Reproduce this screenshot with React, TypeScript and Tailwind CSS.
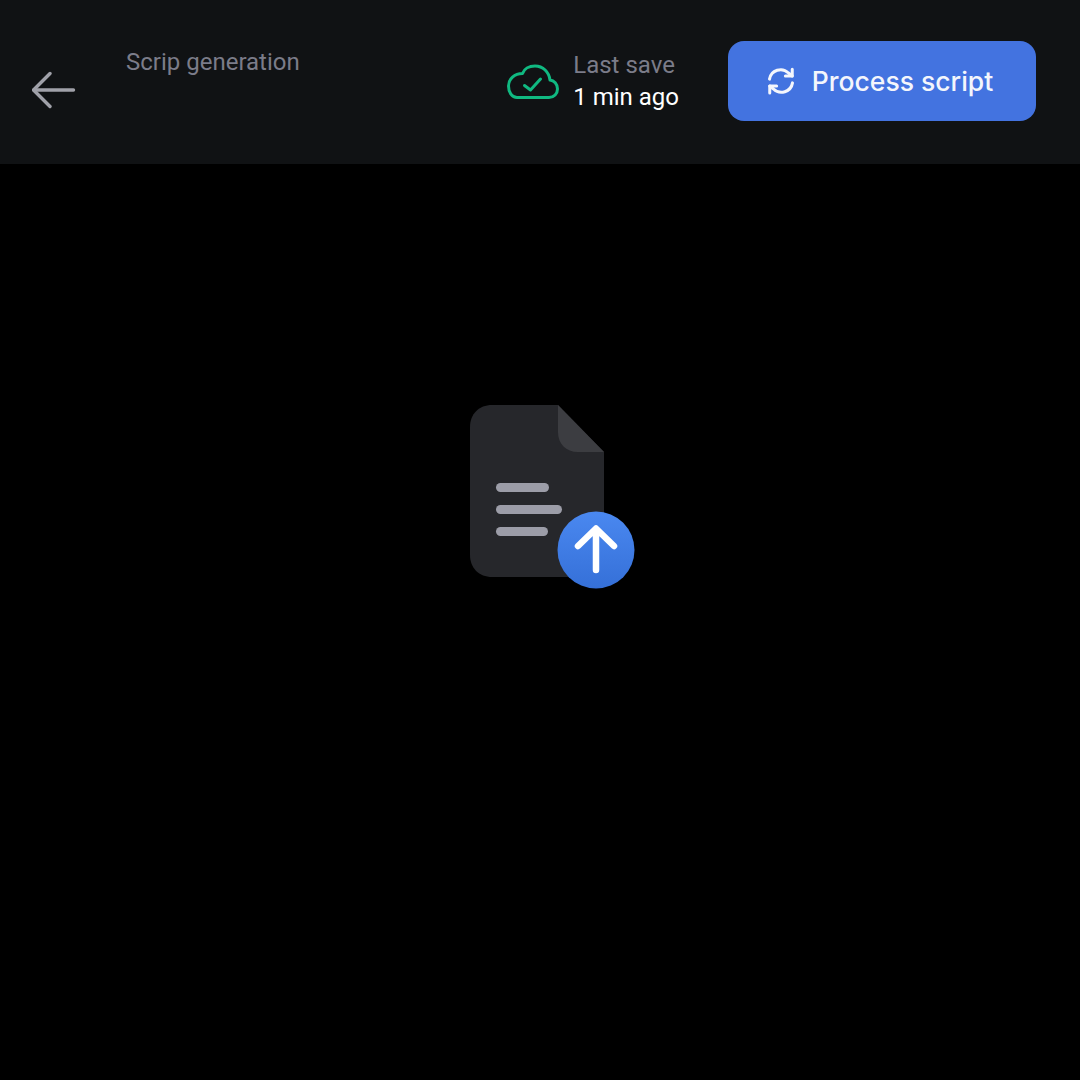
export default function App() {
  return (
    <div className="w-[1080px] h-[1080px] bg-black overflow-hidden flex flex-col font-['Roboto',sans-serif]">
      <header className="h-[164px] bg-[#101214] flex pl-[32px] pr-[44px]">
        <div className="pt-[68px] w-[94px] shrink-0">
          <svg width="44" height="44" viewBox="0 0 44 44" fill="none" stroke="#a0a1a9" strokeWidth="3.4" strokeLinecap="round" strokeLinejoin="round">
            <path d="M2 22H41.5" />
            <path d="M18 5.5L1.5 22L18 38.5" />
          </svg>
        </div>
        <div className="pt-[47px] text-[24px] leading-[30px] text-[#7b7c89] flex-1">Scrip generation</div>
        <div className="flex items-center h-full">
          <svg width="53" height="36" viewBox="0 0 53 36" fill="none" stroke="#10b981" strokeWidth="3" strokeLinecap="round" strokeLinejoin="round" className="mr-[13px] -mt-[1px]">
            <path d="M10 33.5H42C47 33.5 50.5 29.5 50.5 25C50.5 20 47 16.5 43 16C42 8 36 2 28 2C22 2 17 5 15.5 9.5C7.5 9.5 1.5 15 1.5 22C1.5 28.5 5 33.5 10 33.5Z" />
            <path d="M17.5 21.5L23.5 26L33.5 15" />
          </svg>
          <div className="flex flex-col text-[24px] leading-[32px] mb-[2px] mr-[49px]">
            <span className="text-[#7b7c89]">Last save</span>
            <span className="text-white">1 min ago</span>
          </div>
          <button className="w-[308px] h-[80px] mb-[2px] pt-[2px] pr-[5px] rounded-[16px] bg-[#4373e0] flex items-center justify-center gap-[16px] text-[#f4f6fc] font-['Inter',sans-serif] font-medium text-[26.5px]">
            <svg width="30" height="30" viewBox="0 0 24 24" fill="none" stroke="currentColor" strokeWidth="2.4" strokeLinecap="round" strokeLinejoin="round" className="-mt-[3px]">
              <path d="M2.8 10.5A9 9 0 0 1 18 5.6L21 8" />
              <path d="M21 2.5V8h-5.5" />
              <path d="M21.2 13.5A9 9 0 0 1 6 18.4L3 16" />
              <path d="M8.5 16H3v5.5" />
            </svg>
            Process script
          </button>
        </div>
      </header>
      <main className="flex-1 flex justify-center pt-[241px]">
        <svg width="216" height="184" viewBox="0 0 216 184" fill="none">
          <path d="M60 0H126L172 47V150C172 163 163 172 150 172H60C47 172 38 163 38 150V22C38 9 47 0 60 0Z" fill="#26272b" />
          <path d="M126 0L172 47H146C134 47 126 39 126 27V0Z" fill="#3c3d41" />
          <rect x="64" y="78" width="53" height="9" rx="4.5" fill="#9c9da8" />
          <rect x="64" y="100" width="66" height="9" rx="4.5" fill="#9c9da8" />
          <rect x="64" y="122" width="52" height="9" rx="4.5" fill="#9c9da8" />
          <defs>
            <linearGradient id="blueGrad" x1="0" y1="0" x2="0" y2="1">
              <stop offset="0" stopColor="#4a88f0" />
              <stop offset="1" stopColor="#3570d8" />
            </linearGradient>
          </defs>
          <circle cx="164" cy="145" r="38.5" fill="url(#blueGrad)" />
          <path d="M164 165V125M146 141L164 123.5L182 141" stroke="#ffffff" strokeWidth="6.5" strokeLinecap="round" strokeLinejoin="round" />
        </svg>
      </main>
    </div>
  );
}
